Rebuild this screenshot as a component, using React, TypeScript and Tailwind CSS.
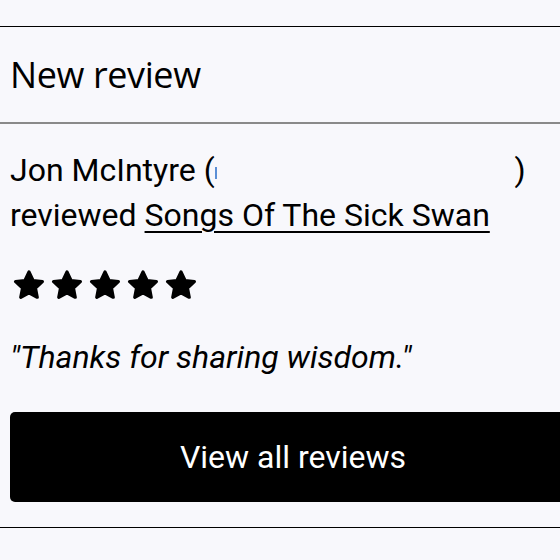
import React from 'react';

const Star = () => (
  <svg width="32" height="30" viewBox="2.2 2.4 19.6 18.6" className="block">
    <path
      d="M12 3.6l2.5 5.3 5.8.7-4.3 4 1.1 5.7L12 16.5l-5.1 2.8 1.1-5.7-4.3-4 5.8-.7z"
      fill="#000"
      stroke="#000"
      strokeWidth="2"
      strokeLinejoin="round"
    />
  </svg>
);

const App = () => {
  return (
    <div className="h-[560px] w-[560px] overflow-hidden bg-[#f8f8fc] font-['Roboto',sans-serif] text-black">
      <div className="h-[26px]" />
      <div className="border-t border-black">
        {/* header */}
        <div className="flex h-[97px] items-center border-b-2 border-[#8a8a8a] pl-[10px]">
          <h1 className="font-['Open_Sans',sans-serif] text-[36px] font-normal leading-none tracking-[-0.4px]">
            New review
          </h1>
        </div>

        {/* body */}
        <div className="pl-[10px] pt-[24px]">
          <p className="text-[32px] leading-[45px]">
            Jon McIntyre (
            <span className="inline-block w-[300px] align-middle">
              <span className="block h-[12px] w-[2px] bg-[#5b8fd6]" />
            </span>
            )
            <br />
            reviewed{' '}
            <a href="#" className="underline decoration-[2px] underline-offset-[5px]">
              Songs Of The Sick Swan
            </a>
          </p>

          <div className="mt-[32px] flex gap-[6px] pl-[3px]">
            <Star />
            <Star />
            <Star />
            <Star />
            <Star />
          </div>

          <p className="mt-[41px] text-[32px] italic leading-none">"Thanks for sharing wisdom."</p>

          <button className="mt-[39px] flex h-[90px] w-[566px] items-center justify-center rounded-[5px] bg-black text-[32px] text-white">
            View all reviews
          </button>
        </div>

        <div className="mt-[25px] border-t border-black" />
      </div>
    </div>
  );
};

export default App;
